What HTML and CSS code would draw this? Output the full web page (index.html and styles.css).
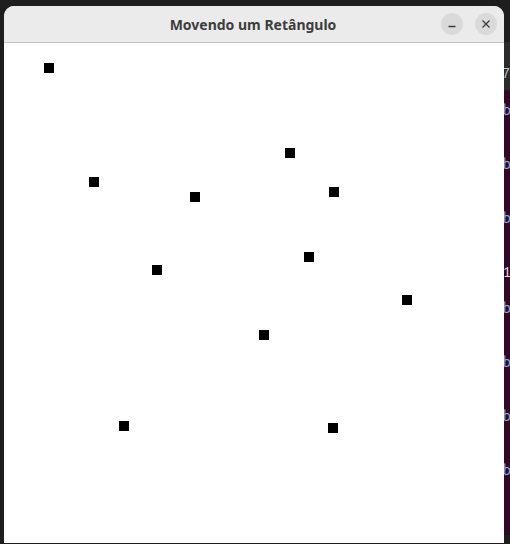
FILE: index.html
```html
<!DOCTYPE html>
<html lang="pt">
<head>
<meta charset="utf-8">
<title>Movendo um Retângulo</title>
<link rel="stylesheet" href="styles.css">
</head>
<body>
<div class="desktop">
  <div class="gutter"></div>
  <div class="window">
    <div class="titlebar">
      <div class="title">Movendo um Retângulo</div>
      <div class="controls">
        <button class="ctl" aria-label="Minimizar">
          <svg width="10" height="10" viewBox="0 0 10 10"><path d="M1.5 7.5h7" stroke="#3d3d3d" stroke-width="1.3" fill="none"/></svg>
        </button>
        <button class="ctl" aria-label="Fechar">
          <svg width="10" height="10" viewBox="0 0 10 10"><path d="M1.5 1.5l7 7M8.5 1.5l-7 7" stroke="#3d3d3d" stroke-width="1.3" fill="none"/></svg>
        </button>
      </div>
    </div>
    <svg class="canvas" width="500" height="500" viewBox="0 0 500 500">
      <rect x="40" y="20" width="10" height="10"/>
      <rect x="85" y="134" width="10" height="10"/>
      <rect x="281" y="105" width="10" height="10"/>
      <rect x="325" y="144" width="10" height="10"/>
      <rect x="186" y="149" width="10" height="10"/>
      <rect x="300" y="209" width="10" height="10"/>
      <rect x="148" y="222" width="10" height="10"/>
      <rect x="398" y="252" width="10" height="10"/>
      <rect x="255" y="287" width="10" height="10"/>
      <rect x="115" y="378" width="10" height="10"/>
      <rect x="324" y="380" width="10" height="10"/>
    </svg>
  </div>
  <div class="terminal">
    <div class="term-head"><span class="path">7/</span></div>
    <div class="term-body">
      <span class="ln l1">b</span>
      <span class="ln l2">b</span>
      <span class="ln l2">b</span>
      <span class="ln l3 num">1</span>
      <span class="ln l4">b</span>
      <span class="ln l2">b</span>
      <span class="ln l2">b</span>
      <span class="ln l2">b</span>
    </div>
  </div>
</div>
</body>
</html>
```

FILE: styles.css
```css
html, body {
  margin: 0;
  padding: 0;
  background: #1e1e1e;
  width: 510px;
  height: 544px;
  overflow: hidden;
}

.desktop {
  display: flex;
  align-items: flex-start;
  padding-top: 6px;
}

.gutter {
  width: 4px;
  flex: none;
}

.window {
  width: 500px;
  flex: none;
  display: flex;
  flex-direction: column;
  border-radius: 10px 10px 0 0;
  overflow: hidden;
  background: #ffffff;
}

.titlebar {
  height: 36px;
  background: #ebebeb;
  border-bottom: 1px solid #c4c4c4;
  display: flex;
  align-items: center;
  justify-content: center;
  position: relative;
}

.title {
  font-family: "Noto Sans", "DejaVu Sans", sans-serif;
  font-weight: 700;
  font-size: 14px;
  color: #3d3d3d;
  margin-left: -2px;
}

.controls {
  position: absolute;
  right: 7px;
  top: 7px;
  display: flex;
  gap: 12px;
}

.ctl {
  width: 22px;
  height: 22px;
  border-radius: 50%;
  border: none;
  padding: 0;
  background: #dadada;
  display: flex;
  align-items: center;
  justify-content: center;
}

.canvas {
  display: block;
  background: #ffffff;
}

.canvas rect {
  fill: #000000;
}

.terminal {
  width: 6px;
  flex: none;
  margin-top: 36px;
  overflow: hidden;
  display: flex;
  flex-direction: column;
  font-family: "Ubuntu Mono", "DejaVu Sans Mono", monospace;
  font-size: 14px;
  line-height: 16px;
}

.term-head {
  height: 48px;
  background: #2b2b2b;
  color: #c8c8c8;
  display: flex;
  align-items: flex-end;
  padding-bottom: 9px;
  box-sizing: border-box;
}

.path {
  margin-left: -2px;
}

.term-body {
  height: 445px;
  background: #300a24;
  display: flex;
  flex-direction: column;
  color: #8fb4e0;
}

.ln {
  display: block;
  height: 16px;
  margin-left: -1px;
}

.l1 { margin-top: 12px; }
.l2 { margin-top: 38px; }
.l3 { margin-top: 38px; }
.l4 { margin-top: 20px; }

.num {
  color: #e8e8e8;
}
```
